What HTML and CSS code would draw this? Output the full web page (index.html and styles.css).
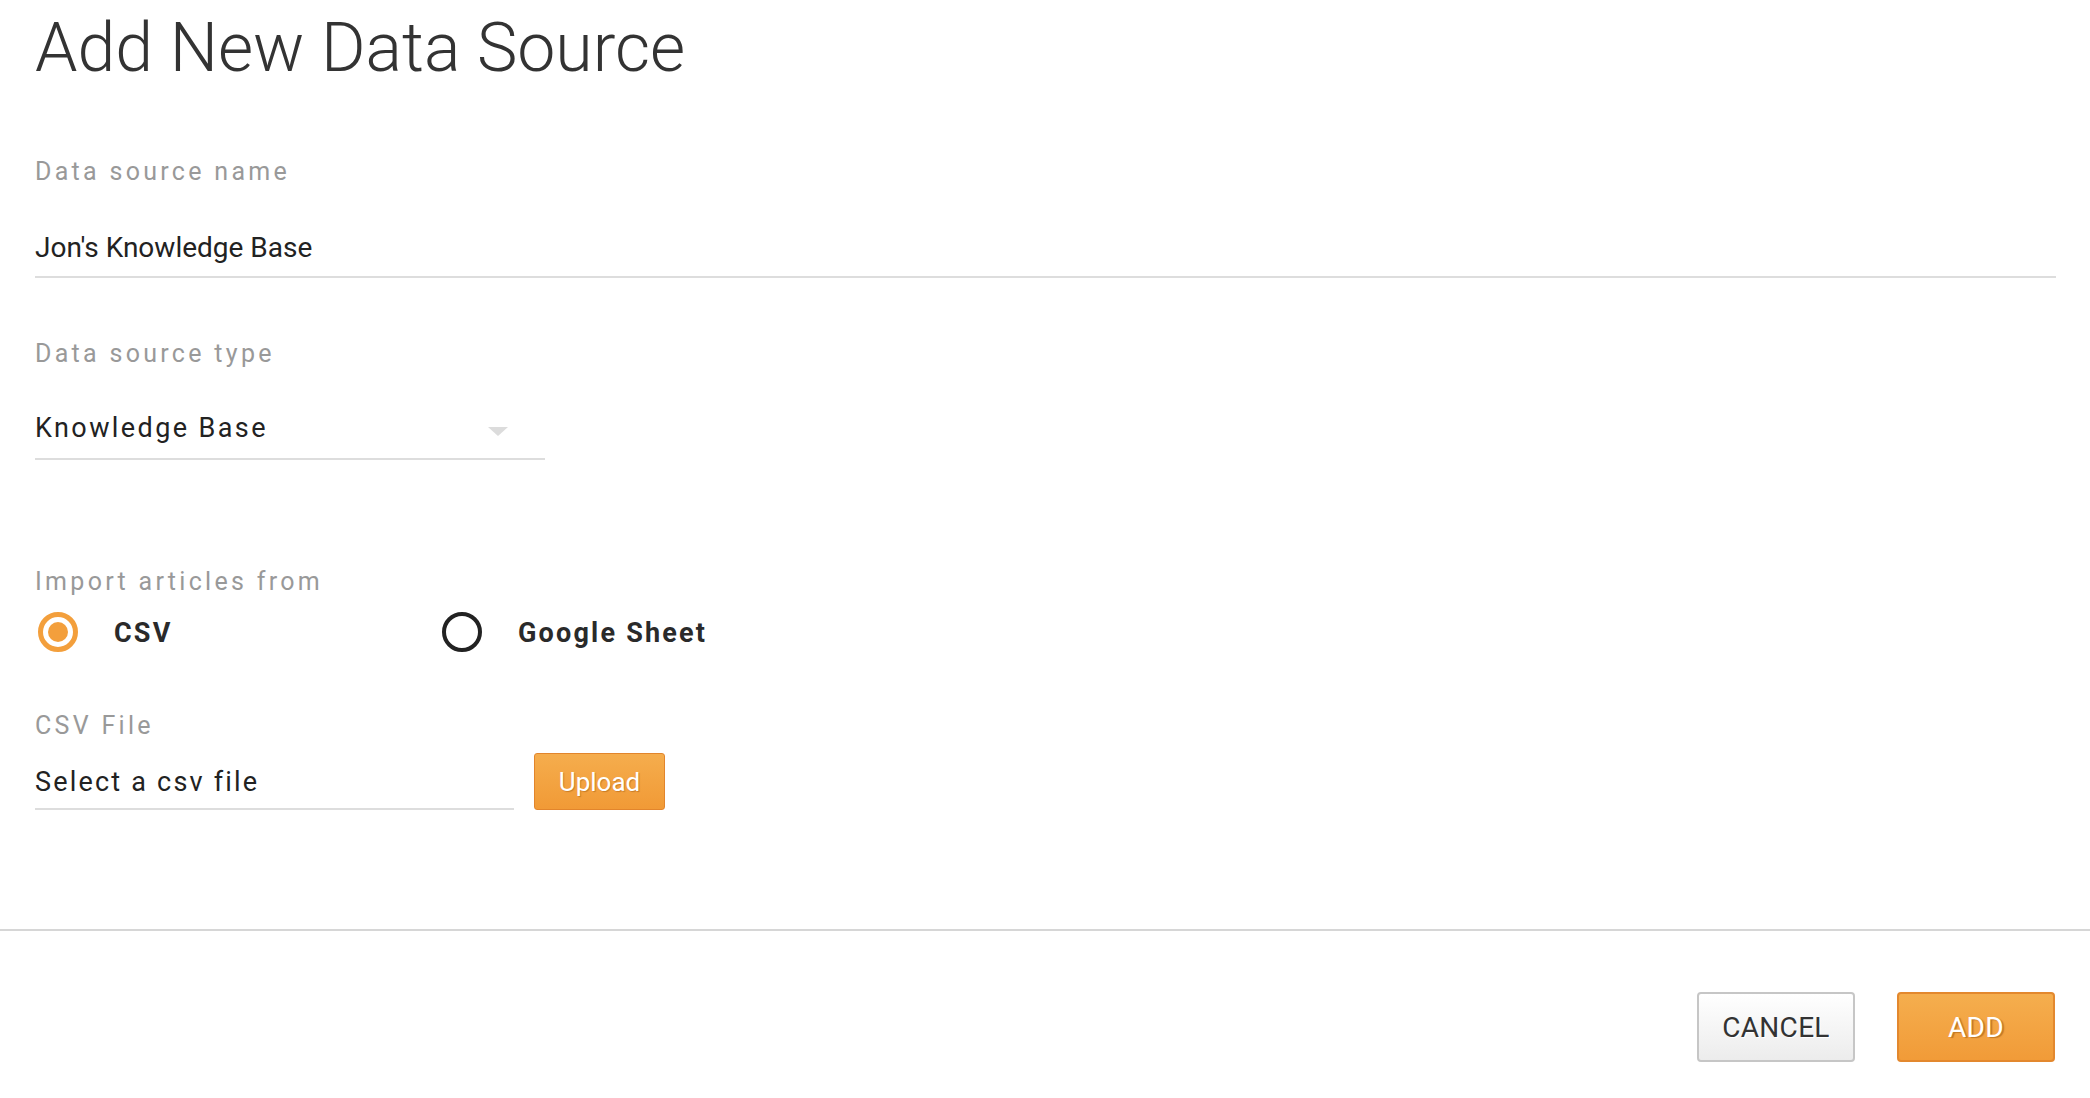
FILE: index.html
```html
<!DOCTYPE html>
<html lang="en">
<head>
<meta charset="utf-8">
<title>Add New Data Source</title>
<link rel="stylesheet" href="styles.css">
</head>
<body>
<main class="page">
  <div class="content">
    <h1 class="title">Add New Data Source</h1>
    <section class="form">
      <div class="field field-name">
        <label class="field-label">Data source name</label>
        <div class="text-input">Jon's Knowledge Base</div>
      </div>
      <div class="field field-type">
        <label class="field-label">Data source type</label>
        <div class="select">
          <span class="select-value">Knowledge Base</span>
          <span class="caret"></span>
        </div>
      </div>
      <div class="field field-import">
        <label class="field-label">Import articles from</label>
        <div class="radio-group">
          <div class="radio-option">
            <span class="radio radio-checked"></span>
            <span class="radio-text">CSV</span>
          </div>
          <div class="radio-option">
            <span class="radio"></span>
            <span class="radio-text">Google Sheet</span>
          </div>
        </div>
      </div>
      <div class="field field-file">
        <label class="field-label">CSV File</label>
        <div class="file-row">
          <div class="file-input">Select a csv file</div>
          <button class="btn btn-upload">Upload</button>
        </div>
      </div>
    </section>
  </div>
  <footer class="actions">
    <button class="btn btn-cancel">CANCEL</button>
    <button class="btn btn-add">ADD</button>
  </footer>
</main>
</body>
</html>
```

FILE: styles.css
```css
* { box-sizing: border-box; }

html, body {
  margin: 0;
  padding: 0;
  background: #ffffff;
}

body {
  font-family: Roboto, "Liberation Sans", Arial, sans-serif;
  color: #222222;
}

.page {
  width: 100%;
}

.content {
  padding: 8px 34px 0 35px;
}

.title {
  margin: 0;
  font-size: 68px;
  line-height: 80px;
  font-weight: 300;
  color: #333333;
  letter-spacing: 0;
}

.form {
  margin-top: 70px;
  display: flex;
  flex-direction: column;
}

.field-label {
  display: block;
  font-size: 25px;
  line-height: 28px;
  color: #999999;
  letter-spacing: 3.3px;
}

.text-input {
  margin-top: 46px;
  font-size: 28px;
  line-height: 32px;
  color: #222222;
  padding-bottom: 12px;
  border-bottom: 2px solid #dddddd;
}

.field-type {
  margin-top: 62px;
}

.select {
  margin-top: 45px;
  width: 510px;
  display: flex;
  align-items: center;
  padding-bottom: 15px;
  border-bottom: 2px solid #dddddd;
}

.select-value {
  font-size: 27px;
  line-height: 30px;
  letter-spacing: 2.4px;
  color: #222222;
}

.caret {
  margin-left: auto;
  margin-right: 37px;
  margin-top: 7px;
  width: 0;
  height: 0;
  border-left: 10px solid transparent;
  border-right: 10px solid transparent;
  border-top: 9px solid #dcdcdc;
}

.field-import {
  margin-top: 108px;
}

.radio-group {
  margin-top: 16px;
  display: grid;
  grid-template-columns: 404px auto;
  padding-left: 3px;
}

.radio-option {
  display: flex;
  align-items: center;
}

.radio {
  width: 40px;
  height: 40px;
  border-radius: 50%;
  border: 4px solid #222222;
  display: flex;
  align-items: center;
  justify-content: center;
  flex: none;
}

.radio-checked {
  border: 5px solid #f39f3c;
}

.radio-checked::after {
  content: "";
  width: 20px;
  height: 20px;
  border-radius: 50%;
  background: #f39f3c;
}

.radio-text {
  margin-left: 36px;
  margin-top: 2px;
  font-size: 27px;
  line-height: 32px;
  font-weight: 700;
  letter-spacing: 2.2px;
  color: #2a2a2a;
}

.field-file {
  margin-top: 60px;
}

.file-row {
  margin-top: 13px;
  display: flex;
  align-items: flex-start;
}

.file-input {
  width: 479px;
  font-size: 27px;
  line-height: 30px;
  letter-spacing: 2.2px;
  color: #222222;
  padding-top: 14px;
  padding-bottom: 11px;
  border-bottom: 2px solid #dddddd;
}

.btn {
  font-family: Roboto, "Liberation Sans", Arial, sans-serif;
  cursor: pointer;
  border-radius: 4px;
  padding: 0;
}

.btn-upload {
  margin-left: 20px;
  width: 131px;
  height: 57px;
  font-size: 26px;
  color: #ffffff;
  background: linear-gradient(#f5ad4d, #f19a36);
  border: 1px solid #e2852c;
  text-shadow: 1px 1px 1px rgba(150, 80, 10, 0.45);
  border-radius: 3px;
}

.actions {
  margin-top: 119px;
  border-top: 2px solid #d6d6d6;
  padding: 61px 35px 35px 0;
  display: flex;
  justify-content: flex-end;
  gap: 42px;
}

.btn-cancel,
.btn-add {
  width: 158px;
  height: 70px;
  font-size: 28px;
  letter-spacing: 0.3px;
}

.btn-cancel {
  color: #333333;
  background: linear-gradient(#ffffff, #ececec);
  border: 2px solid #c6c6c6;
  text-shadow: 1px 1px 0 #ffffff;
}

.btn-add {
  color: #ffffff;
  background: linear-gradient(#f5ae4e, #f19b38);
  border: 2px solid #e3882e;
  text-shadow: 2px 1px 1px rgba(150, 80, 10, 0.5);
}
```
